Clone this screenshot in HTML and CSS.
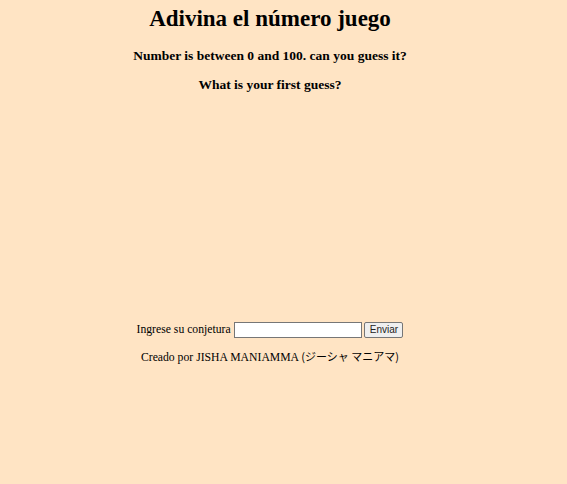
FILE: index.html
```html
<!DOCTYPE html>
<html lang="es">
<head>
<meta charset="utf-8">
<title>Adivina el número juego</title>
<link rel="stylesheet" href="styles.css">
</head>
<body>
<div class="page">
  <h1 class="title">Adivina el número juego</h1>
  <h3 class="sub sub-first">Number is between 0 and 100. can you guess it?</h3>
  <h3 class="sub">What is your first guess?</h3>
  <div class="spacer"></div>
  <form class="guess-form">
    <label class="label" for="guess">Ingrese su conjetura</label>
    <input class="field" id="guess" type="text">
    <button class="btn" type="button">Enviar</button>
  </form>
  <p class="credit">Creado por JISHA MANIAMMA <span class="jp">(ジーシャ マニアマ)</span></p>
</div>
</body>
</html>
```
FILE: styles.css
```css
html, body {
  margin: 0;
  padding: 0;
  background: #ffe4c4;
}
body {
  font-family: "Liberation Serif", "Times New Roman", serif;
  color: #000;
  height: 484px;
}
.page {
  width: 540px;
  text-align: center;
}
.title {
  font-size: 23px;
  font-weight: bold;
  margin: 6px 0 0;
}
.sub {
  font-size: 13.5px;
  font-weight: bold;
  margin: 13px 0 0;
}
.sub-first {
  margin-top: 16px;
}
.spacer {
  height: 229px;
}
.guess-form {
  margin: 0;
  font-size: 11.7px;
}
.label {
  font-size: 11.7px;
}
.field {
  box-sizing: border-box;
  width: 128px;
  height: 16px;
  font-size: 11.7px;
  border: 1px solid #767676;
  padding: 1px 2px;
  vertical-align: middle;
  background: #fff;
}
.btn {
  box-sizing: border-box;
  width: 39px;
  height: 16px;
  font-family: "Liberation Sans", Arial, sans-serif;
  font-size: 10px;
  line-height: 12px;
  padding: 0;
  color: #222;
  border: 1px solid #767676;
  border-radius: 2px;
  background: #efefef;
  vertical-align: middle;
}
.credit {
  font-size: 11.7px;
  margin: 10px 0 0;
}
.jp {
  font-family: "Noto Sans CJK JP", sans-serif;
  font-size: 11px;
}
```
